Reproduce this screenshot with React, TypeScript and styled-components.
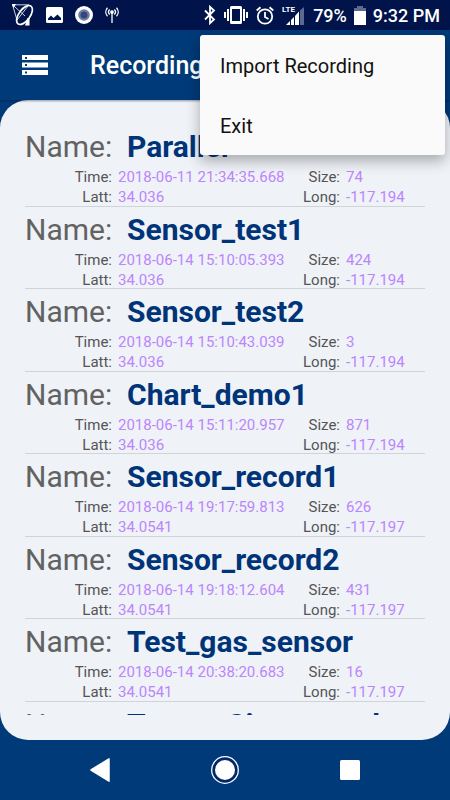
import React from "react";
import styled, { createGlobalStyle } from "styled-components";

const GlobalStyle = createGlobalStyle`
  * { box-sizing: border-box; }
  html, body, #root { height: 100%; margin: 0; }
  body { font-family: Roboto, "Liberation Sans", sans-serif; background: #003a78; overflow: hidden; }
  button { font: inherit; border: 0; padding: 0; background: none; cursor: pointer; }
`;

const Screen = styled.div`
  position: relative;
  display: flex;
  flex-direction: column;
  height: 100vh;
  background: #003a78;
`;

const StatusBar = styled.div`
  flex: none;
  display: flex;
  align-items: center;
  justify-content: space-between;
  height: 30px;
  padding: 0 10px 0 12px;
  background: #00134a;
  color: #fff;
`;

const StatusGroup = styled.div<{ $gap: number }>`
  display: flex;
  align-items: center;
  gap: ${(p) => p.$gap}px;
  svg { display: block; }
`;

const StatusText = styled.span`
  font-size: 18px;
  line-height: 30px;
  font-weight: 500;
  padding-top: 2px;
`;

const AppBar = styled.header`
  position: relative;
  z-index: 1;
  flex: none;
  display: flex;
  align-items: center;
  gap: 42px;
  height: 70px;
  padding: 0 22px;
  box-shadow: 0 1px 2px rgba(0, 10, 40, 0.4);
`;

const BarButton = styled.button`
  display: block;
  color: #fff;
  svg { display: block; }
`;

const Title = styled.h1`
  margin: 0;
  padding-top: 2px;
  color: #fff;
  font-size: 25px;
  line-height: 30px;
  font-weight: 500;
`;

const Card = styled.main`
  flex: 1;
  min-height: 0;
  display: flex;
  padding: 24px 25px 25px;
  border-radius: 28px;
  background: #eff2f7;
`;

const List = styled.ul`
  flex: 1;
  margin: 0;
  padding: 0;
  list-style: none;
  overflow: hidden;
`;

const Row = styled.li`
  height: 82px;
  padding-top: 4px;
  border-bottom: 1px solid #d0d3d8;
  &:nth-child(odd) { height: 83px; }
`;

const NameLine = styled.div`
  display: grid;
  grid-template-columns: 87px 1fr;
  column-gap: 15px;
  font-size: 30px;
  line-height: 38px;
  white-space: nowrap;
`;

const NameLabel = styled.span`
  color: #626262;
  font-weight: 400;
`;

const NameValue = styled.strong`
  color: #003478;
  font-weight: 700;
`;

const Details = styled.dl`
  display: grid;
  grid-template-columns: 87px 1fr 50px 79px;
  column-gap: 6px;
  margin: 0;
  padding-top: 1px;
  font-size: 15px;
  line-height: 20px;
  white-space: nowrap;
`;

const Label = styled.dt`
  color: #555;
  text-align: right;
`;

const Value = styled.dd`
  margin: 0;
  min-width: 0;
  color: #bb86fc;
`;

const Menu = styled.div`
  position: absolute;
  z-index: 2;
  top: 35px;
  right: 5px;
  display: flex;
  flex-direction: column;
  width: 245px;
  border-radius: 3px;
  background: #fafafa;
  box-shadow: 0 6px 14px rgba(0, 0, 0, 0.3);
`;

const MenuItem = styled.button`
  height: 60px;
  padding: 2px 20px 0;
  color: #111;
  font-size: 20px;
  text-align: left;
`;

const NavBar = styled.nav`
  flex: none;
  display: grid;
  grid-template-columns: repeat(3, 125px);
  justify-content: center;
  height: 60px;
`;

const NavButton = styled.button`
  display: grid;
  place-items: center;
`;

const StorageIcon = () => (
  <svg width="26" height="20" viewBox="0 0 26 20" fill="#fff">
    <path fillRule="evenodd" d="M0 0h26v5H0zM3 2v2h2V2zM0 7.500h26v5H0zM3 9v2h2V9zM0 15h26v5H0zM3 16.500v2h2v-2z" />
  </svg>
);

const DishIcon = () => (
  <svg width="22" height="22" viewBox="0 0 22 22" fill="none" stroke="#fff" strokeWidth="1">
    <path d="M15.500 14h2v7.500h-4.500z" fill="#fff" stroke="none" />
    <ellipse cx="12.500" cy="11" rx="11" ry="5.600" transform="rotate(-54 12.500 11)" strokeWidth="1.700" />
    <path d="M.5.800H17M.5.800 5 16M.5.800 13 12M5 16 17 .8" strokeWidth=".8" />
    <path d="M0 0h4L1.500 4z" fill="#fff" stroke="none" />
  </svg>
);

const ImageIcon = () => (
  <svg width="17" height="16" viewBox="0 0 17 16">
    <rect width="17" height="16" rx="1.500" fill="#fff" />
    <path d="M2 13V11.500l3-3 2.500 2.500L11.500 7.500 15 11v2z" fill="#00134a" />
  </svg>
);

const RecordIcon = () => (
  <svg width="18" height="18" viewBox="0 0 18 18">
    <circle cx="9" cy="9" r="9" fill="#fff" />
    <circle cx="9" cy="9" r="5.800" fill="#7080a5" />
    <circle cx="9" cy="9" r="3.500" fill="#34477b" />
  </svg>
);

const AntennaIcon = () => (
  <svg width="14" height="16" viewBox="0 0 14 16" fill="none" stroke="#fff" strokeWidth="1.300">
    <circle cx="7" cy="5" r="1.200" fill="#fff" />
    <path d="M7 6v10M4.700 2.500c-1.500 1.500-1.500 3.500 0 5M9.300 2.500c1.500 1.500 1.500 3.500 0 5M2.500.700c-2.300 2.500-2.300 6 0 8.500M11.500.700c2.300 2.500 2.300 6 0 8.500" />
  </svg>
);

const BluetoothIcon = () => (
  <svg width="12" height="20" viewBox="0 0 12 20" fill="none" stroke="#fff" strokeWidth="1.800">
    <path d="M1 5.500 10 14.500 6 18.200V1.800L10 5.500 1 14.500" />
  </svg>
);

const VibrateIcon = () => (
  <svg width="24" height="18" viewBox="0 0 24 18" fill="#fff">
    <path fillRule="evenodd" d="M7.500 0h9Q18 0 18 1.500v15Q18 18 16.500 18h-9Q6 18 6 16.500v-15Q6 0 7.500 0zM8 3v12h8V3z" />
    <path d="M3 3h2v12H3zM19 3h2v12h-2zM0 6h2v6H0zM22 6h2v6h-2z" />
  </svg>
);

const AlarmIcon = () => (
  <svg width="18" height="19" viewBox="0 0 18 19" fill="none" stroke="#fff" strokeWidth="1.800">
    <circle cx="9" cy="10.500" r="7.200" />
    <path d="M9 6v5l3.500 2M.7 4.500 4.500 1.200M17.300 4.500 13.500 1.200" />
  </svg>
);

const SignalIcon = () => (
  <svg width="24" height="22" viewBox="0 0 24 22">
    <text x="0" y="8" fontSize="8" fontWeight="700" fill="#fff">LTE</text>
    <path d="M18 6.500 22 3v18h-4z" fill="#5c6a93" />
    <path d="M4 21 8 17v4zM9 16l3-3v8H9zM13 12l4-4.500V21h-4z" fill="#fff" />
  </svg>
);

const BatteryIcon = () => (
  <svg width="12" height="19" viewBox="0 0 12 19">
    <path d="M3 0h6v2h3v4H0V2h3z" fill="#5c6a93" />
    <path d="M0 5h12v14H0z" fill="#fff" />
  </svg>
);

const records = [
  { name: "Parallel", time: "2018-06-11 21:34:35.668", size: "74", latt: "34.036", long: "-117.194" },
  { name: "Sensor_test1", time: "2018-06-14 15:10:05.393", size: "424", latt: "34.036", long: "-117.194" },
  { name: "Sensor_test2", time: "2018-06-14 15:10:43.039", size: "3", latt: "34.036", long: "-117.194" },
  { name: "Chart_demo1", time: "2018-06-14 15:11:20.957", size: "871", latt: "34.036", long: "-117.194" },
  { name: "Sensor_record1", time: "2018-06-14 19:17:59.813", size: "626", latt: "34.0541", long: "-117.197" },
  { name: "Sensor_record2", time: "2018-06-14 19:18:12.604", size: "431", latt: "34.0541", long: "-117.197" },
  { name: "Test_gas_sensor", time: "2018-06-14 20:38:20.683", size: "16", latt: "34.0541", long: "-117.197" },
  { name: "Target_Sim_record" },
];

export default function App() {
  return (
    <Screen>
      <GlobalStyle />
      <StatusBar>
        <StatusGroup $gap={12}>
          <DishIcon />
          <ImageIcon />
          <RecordIcon />
          <AntennaIcon />
        </StatusGroup>
        <StatusGroup $gap={7}>
          <StatusGroup $gap={8}>
            <BluetoothIcon />
            <VibrateIcon />
            <AlarmIcon />
            <SignalIcon />
          </StatusGroup>
          <StatusText>79%</StatusText>
          <BatteryIcon />
          <StatusText>9:32 PM</StatusText>
        </StatusGroup>
      </StatusBar>
      <AppBar>
        <BarButton aria-label="Open list"><StorageIcon /></BarButton>
        <Title>Recordings</Title>
      </AppBar>
      <Card>
        <List>
          {records.map((r) => (
            <Row key={r.name}>
              <NameLine>
                <NameLabel>Name:</NameLabel>
                <NameValue>{r.name}</NameValue>
              </NameLine>
              {r.time && (
                <Details>
                  <Label>Time:</Label>
                  <Value>{r.time}</Value>
                  <Label>Size:</Label>
                  <Value>{r.size}</Value>
                  <Label>Latt:</Label>
                  <Value>{r.latt}</Value>
                  <Label>Long:</Label>
                  <Value>{r.long}</Value>
                </Details>
              )}
            </Row>
          ))}
        </List>
      </Card>
      <NavBar>
        <NavButton aria-label="Back">
          <svg width="20" height="24" viewBox="0 0 20 24"><path d="M19 .8v22.400L1 12z" fill="#fff" stroke="#fff" strokeWidth="1.500" strokeLinejoin="round" /></svg>
        </NavButton>
        <NavButton aria-label="Home">
          <svg width="28" height="28" viewBox="0 0 28 28"><circle cx="14" cy="14" r="13.300" fill="#00276a" stroke="#fff" strokeWidth="1.300" /><circle cx="14" cy="14" r="10" fill="#fff" /></svg>
        </NavButton>
        <NavButton aria-label="Recent apps">
          <svg width="20" height="20" viewBox="0 0 20 20"><rect width="20" height="20" rx="1.500" fill="#fff" /></svg>
        </NavButton>
      </NavBar>
      <Menu role="menu">
        <MenuItem role="menuitem">Import Recording</MenuItem>
        <MenuItem role="menuitem">Exit</MenuItem>
      </Menu>
    </Screen>
  );
}
